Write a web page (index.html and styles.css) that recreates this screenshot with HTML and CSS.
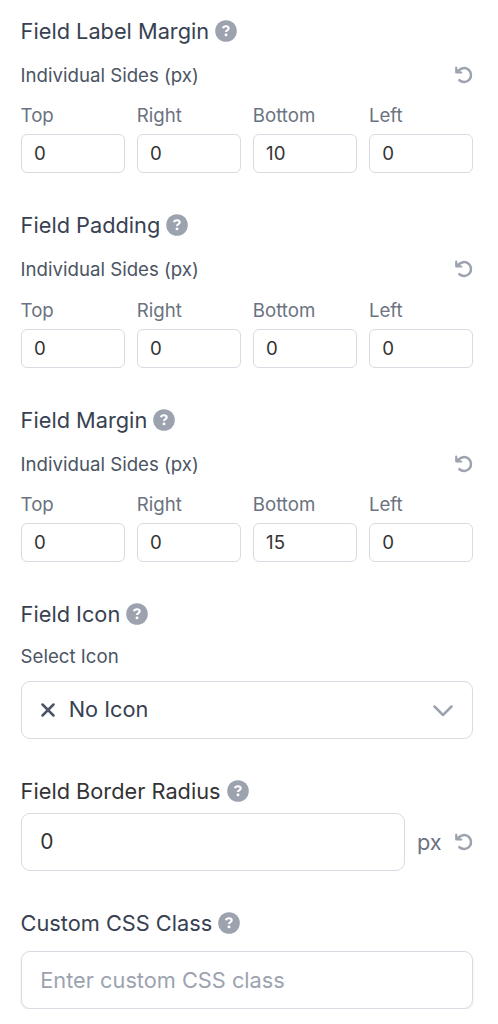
FILE: index.html
```html
<!DOCTYPE html>
<html lang="en">
<head>
<meta charset="utf-8">
<title>Field settings</title>
<link rel="stylesheet" href="styles.css">
</head>
<body>
<svg class="defs" aria-hidden="true">
  <symbol id="help" viewBox="0 0 22 22">
    <circle cx="11" cy="11" r="10.8" fill="#9ca3af"/>
    <path d="M8 8.3C8.3 6.9 9.3 6.3 10.9 6.3c1.7 0 2.8.7 2.8 2 0 1.1-.7 1.6-1.5 2.1-.8.4-1.2.8-1.2 1.5" fill="none" stroke="#fff" stroke-width="2.1"/>
    <circle cx="11" cy="14.9" r="1.45" fill="#fff"/>
  </symbol>
  <symbol id="reset" viewBox="0 0 18 18">
    <path d="M3.4 5A6.95 6.95 0 1 1 4.4 14.2" fill="none" stroke="#9ca3af" stroke-width="2.5" stroke-linecap="round"/>
    <path d="M1.2 1.5V6.5H6.3" fill="none" stroke="#9ca3af" stroke-width="2.1" stroke-linecap="round" stroke-linejoin="round"/>
    <path d="M1.2 2V6.5H5.8Z" fill="#9ca3af"/>
  </symbol>
</svg>
<main class="panel">
  <section class="group">
    <h2 class="title"><span>Field Label Margin</span><svg class="help"><use href="#help"/></svg></h2>
    <div class="sub">Individual Sides (px)<svg class="reset"><use href="#reset"/></svg></div>
    <div class="sides">
      <label class="side">Top<input class="num" value="0"></label>
      <label class="side">Right<input class="num" value="0"></label>
      <label class="side">Bottom<input class="num" value="10"></label>
      <label class="side">Left<input class="num" value="0"></label>
    </div>
  </section>
  <section class="group">
    <h2 class="title"><span>Field Padding</span><svg class="help"><use href="#help"/></svg></h2>
    <div class="sub">Individual Sides (px)<svg class="reset"><use href="#reset"/></svg></div>
    <div class="sides">
      <label class="side">Top<input class="num" value="0"></label>
      <label class="side">Right<input class="num" value="0"></label>
      <label class="side">Bottom<input class="num" value="0"></label>
      <label class="side">Left<input class="num" value="0"></label>
    </div>
  </section>
  <section class="group">
    <h2 class="title"><span>Field Margin</span><svg class="help"><use href="#help"/></svg></h2>
    <div class="sub">Individual Sides (px)<svg class="reset"><use href="#reset"/></svg></div>
    <div class="sides">
      <label class="side">Top<input class="num" value="0"></label>
      <label class="side">Right<input class="num" value="0"></label>
      <label class="side">Bottom<input class="num" value="15"></label>
      <label class="side">Left<input class="num" value="0"></label>
    </div>
  </section>
  <section class="group">
    <h2 class="title"><span>Field Icon</span><svg class="help"><use href="#help"/></svg></h2>
    <div class="sub sub-tight">Select Icon</div>
    <div class="box select">
      <svg class="cross" viewBox="0 0 14 14"><path d="M1.5 1.5 12.5 12.5M12.5 1.5 1.5 12.5"/></svg>
      <span class="choice">No Icon</span>
      <svg class="chevron" viewBox="0 0 20 12"><path d="M1.5 1.5 10 10 18.5 1.5"/></svg>
    </div>
  </section>
  <section class="group">
    <h2 class="title dark"><span>Field Border Radius</span><svg class="help"><use href="#help"/></svg></h2>
    <div class="radius">
      <input class="box value" value="0">
      <span class="unit">px</span>
      <svg class="reset"><use href="#reset"/></svg>
    </div>
  </section>
  <section class="group">
    <h2 class="title"><span>Custom CSS Class</span><svg class="help"><use href="#help"/></svg></h2>
    <input class="box css-class" placeholder="Enter custom CSS class">
  </section>
</main>
</body>
</html>
```
FILE: styles.css
```css
* { box-sizing: border-box; }
body {
  margin: 0;
  background: #fff;
  font-family: Inter, "Liberation Sans", sans-serif;
  color: #374151;
}
.defs { display: none; }
.panel {
  display: flex;
  flex-direction: column;
  gap: 35.6px;
  width: 472.8px;
  padding: 14px 0 0 20.6px;
}
.title {
  display: flex;
  align-items: center;
  gap: 6.2px;
  height: 34px;
  margin: 0;
  font-size: 21.75px;
  font-weight: 400;
  white-space: nowrap;
}
.title span { padding-bottom: 1px; }
.dark { color: #333; }
.help { width: 22px; height: 22px; margin-top: -1px; }
.sub {
  display: flex;
  align-items: center;
  justify-content: space-between;
  height: 34px;
  padding-bottom: 1px;
  margin-top: 10px;
  font-size: 18.65px;
  color: #4b5563;
}
.sub-tight { height: 24px; padding-bottom: 0; margin-top: 12px; }
.reset { width: 18px; height: 18px; flex: none; }
.sides {
  display: grid;
  grid-template-columns: repeat(4, 1fr);
  gap: 12.2px;
  margin-top: 11px;
}
.side {
  display: flex;
  flex-direction: column;
  gap: 7px;
  font-size: 18.65px;
  line-height: 24px;
  color: #6b7280;
}
.num, .box {
  font-family: inherit;
  background: #fff;
  border: 1px solid #d9dbe2;
  outline: none;
}
.num {
  width: 100%;
  height: 39px;
  padding: 0 12.3px 1px;
  border-radius: 6px;
  font-size: 18.65px;
  color: #333;
}
.box {
  width: 100%;
  height: 58px;
  padding: 0 18.7px;
  border-radius: 9px;
  font-size: 21.75px;
}
.select {
  display: flex;
  align-items: center;
  margin-top: 13px;
}
.cross { width: 14px; height: 14px; margin-left: 1px; fill: none; stroke: #4b5563; stroke-width: 2.5; stroke-linecap: round; }
.choice { margin-left: 13.4px; padding-bottom: 2px; }
.chevron { width: 20px; height: 12px; margin: 2px 0 0 auto; fill: none; stroke: #9ca3af; stroke-width: 2.5; stroke-linecap: round; stroke-linejoin: round; }
.radius { display: flex; align-items: center; margin-top: 5px; }
.radius .reset { margin-top: -1px; }
.value { width: 384px; padding-bottom: 2px; font-size: 21px; color: #333; }
.unit { margin-left: 12.4px; margin-right: auto; font-size: 21.75px; color: #6b7280; }
.css-class { display: block; margin-top: 10px; box-shadow: 0 1px 3px rgba(0, 0, 0, .08); }
.css-class::placeholder { color: #9ca3af; opacity: 1; }
```
